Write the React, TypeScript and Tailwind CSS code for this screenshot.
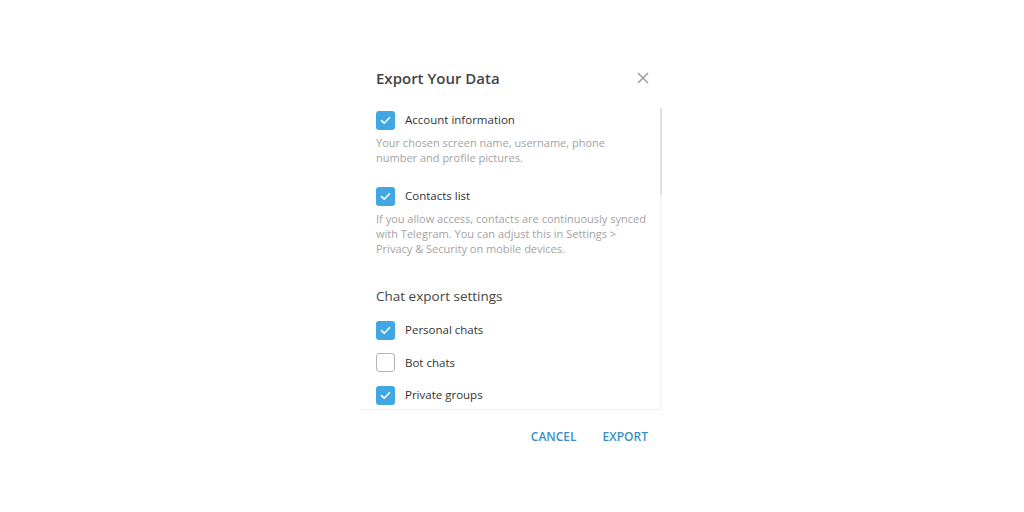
import React from "react";

function Check({ checked }: { checked: boolean }) {
  return checked ? (
    <div className="w-[19px] h-[19px] rounded-[3px] bg-[#40a7e3] flex items-center justify-center shrink-0">
      <svg width="11" height="9" viewBox="0 0 11 9" fill="none">
        <path d="M1.5 4.6 L4.2 7.2 L9.5 1.8" stroke="white" strokeWidth="1.6" strokeLinecap="round" strokeLinejoin="round" />
      </svg>
    </div>
  ) : (
    <div className="w-[19px] h-[19px] rounded-[3px] border-[1.5px] border-[#b5b5b5] bg-white shrink-0" />
  );
}

function Row({ checked, label }: { checked: boolean; label: string }) {
  return (
    <div className="flex items-center h-[20px]">
      <Check checked={checked} />
      <span className="ml-[10px] text-[11.5px] text-[#333]">{label}</span>
    </div>
  );
}

export default function App() {
  return (
    <div className="w-[1024px] h-[512px] bg-white flex justify-center" style={{ fontFamily: '"Open Sans", sans-serif' }}>
      <div className="w-[302px] mt-[62px] mr-[2px] flex flex-col">
        <div className="flex items-center justify-between pl-[16px] pr-[13px] h-[32px]">
          <span className="text-[15px] font-semibold text-[#444]">Export Your Data</span>
          <svg width="12" height="12" viewBox="0 0 12 12">
            <path d="M1 1 L11 11 M11 1 L1 11" stroke="#a0a0a0" strokeWidth="1.6" />
          </svg>
        </div>
        <div className="mt-[14px] h-[302px] flex border-b border-[#f0f0f0]">
          <div className="flex-1 pl-[16px] pr-[8px] pt-[2px] flex flex-col">
            <Row checked label="Account information" />
            <p className="mt-[5px] text-[11px] leading-[15px] text-[#a3a3a3]">
              Your chosen screen name, username, phone<br />number and profile pictures.
            </p>
            <div className="mt-[21px]">
              <Row checked label="Contacts list" />
            </div>
            <p className="mt-[5px] text-[11px] leading-[15px] text-[#a3a3a3]">
              If you allow access, contacts are continuously synced<br />with Telegram. You can adjust this in Settings &gt;<br />Privacy &amp; Security on mobile devices.
            </p>
            <div className="mt-[30px] text-[13.5px] text-[#444] h-[20px] leading-[20px]">Chat export settings</div>
            <div className="mt-[14px] flex flex-col gap-[12.5px]">
              <Row checked label="Personal chats" />
              <Row checked={false} label="Bot chats" />
              <Row checked label="Private groups" />
            </div>
          </div>
          <div className="w-[2px] flex flex-col bg-[#f5f5f5]">
            <div className="h-[87px] bg-[#e0e0e0]" />
          </div>
        </div>
        <div className="flex justify-end items-center h-[53px] pr-[14px] gap-[26px]">
          <span className="text-[12px] font-semibold text-[#3a8fc4]">CANCEL</span>
          <span className="text-[12px] font-semibold text-[#3a8fc4]">EXPORT</span>
        </div>
      </div>
    </div>
  );
}
